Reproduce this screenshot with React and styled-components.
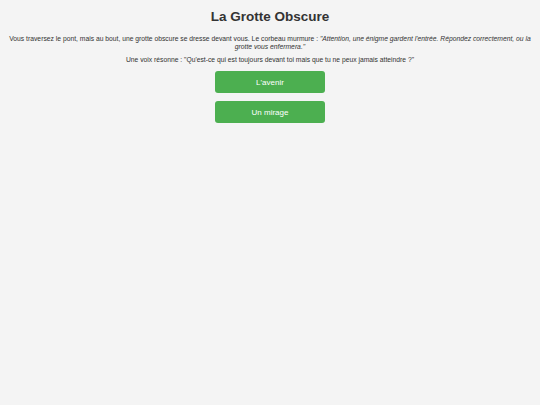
import React from "react";
import styled, { createGlobalStyle } from "styled-components";

const GlobalStyle = createGlobalStyle`
  html, body {
    margin: 0;
    background: #f4f4f4;
  }
  body {
    font-family: "Liberation Sans", Arial, sans-serif;
    color: #333;
  }
`;

const Page = styled.main`
  padding: 9px 8px;
  text-align: center;
  display: flex;
  flex-direction: column;
  align-items: center;
`;

const Title = styled.h1`
  margin: 0 0 11px;
  font-size: 13.5px;
  font-weight: bold;
  color: #333;
`;

const Text = styled.p`
  margin: 0 0 5px;
  font-size: 6.75px;
  line-height: 8px;
  em {
    font-style: italic;
  }
`;

const Choices = styled.div`
  display: flex;
  flex-direction: column;
  gap: 8px;
  margin-top: 2px;
`;

const Choice = styled.button`
  width: 110px;
  height: 22px;
  border: none;
  border-radius: 3px;
  background: #4caf50;
  color: #fff;
  font-family: inherit;
  font-size: 8px;
  font-weight: normal;
  cursor: pointer;
`;

export default function App() {
  return (
    <>
      <GlobalStyle />
      <Page>
        <Title>La Grotte Obscure</Title>
        <Text>
          Vous traversez le pont, mais au bout, une grotte obscure se dresse devant vous. Le corbeau murmure :{" "}
          <em>"Attention, une énigme gardent l'entrée. Répondez correctement, ou la grotte vous enfermera."</em>
        </Text>
        <Text>Une voix résonne : "Qu'est-ce qui est toujours devant toi mais que tu ne peux jamais atteindre ?"</Text>
        <Choices>
          <Choice>L'avenir</Choice>
          <Choice>Un mirage</Choice>
        </Choices>
      </Page>
    </>
  );
}
